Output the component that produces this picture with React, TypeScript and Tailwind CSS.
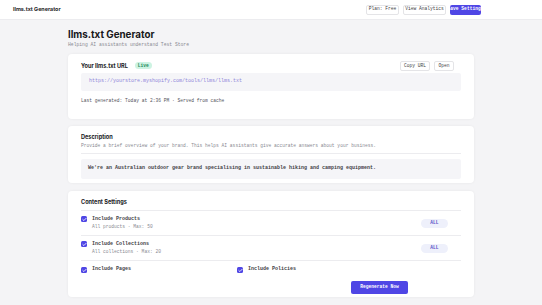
import { Check } from "lucide-react";

const mono = { fontFamily: '"Liberation Mono", "DejaVu Sans Mono", monospace' };
const sans = { fontFamily: "Inter, sans-serif" };

function Box() {
  return (
    <span className="flex h-[6px] w-[6px] shrink-0 items-center justify-center rounded-[1.5px] bg-[#4f46e5]">
      <Check className="h-[5px] w-[5px] text-white" strokeWidth={4} />
    </span>
  );
}

function SettingRow({ title, sub }: { title: string; sub: string }) {
  return (
    <div className="flex h-[25px] items-center justify-between border-t border-[#ececef]">
      <div className="flex flex-col">
        <div className="flex items-center gap-[5px]">
          <Box />
          <span className="text-[5px] font-bold leading-[7px] text-[#3f3f46]">{title}</span>
        </div>
        <span className="ml-[11px] text-[4.6px] leading-[8px] text-[#8a8a92]">{sub}</span>
      </div>
      <span className="mr-[13px] flex h-[9px] w-[27px] items-center justify-center rounded-full bg-[#eef0fb] text-[4.6px] font-bold text-[#5b56c9]">
        ALL
      </span>
    </div>
  );
}

export default function App() {
  return (
    <div className="min-h-[305px] bg-[#f4f4f6]" style={mono}>
      {/* top bar */}
      <div className="flex h-[20px] items-center justify-between border-b border-[#ececef] bg-white pl-[13px] pr-[61px]">
        <span className="text-[5.4px] font-bold text-[#27272a]" style={sans}>
          llms.txt Generator
        </span>
        <div className="flex items-center gap-[4px]">
          <span className="flex h-[10px] w-[33px] items-center justify-center rounded-[2px] border border-[#e4e4e7] bg-white text-[4.6px] text-[#3f3f46]">
            Plan: Free
          </span>
          <span className="flex h-[10px] w-[43px] items-center justify-center rounded-[2px] border border-[#e4e4e7] bg-white text-[4.6px] text-[#3f3f46]">
            View Analytics
          </span>
          <span className="flex h-[10px] w-[31px] items-center justify-center overflow-hidden whitespace-nowrap rounded-[2px] bg-[#4f46e5] text-[4.6px] font-bold text-white">
            Save Settings
          </span>
        </div>
      </div>

      <div className="mx-auto w-[406px] pt-[9px]">
        <h1 className="text-[9.8px] font-bold leading-[12px] text-[#18181b]" style={sans}>
          llms.txt Generator
        </h1>
        <p className="text-[4.7px] leading-[7px] text-[#8a8a92]">Helping AI assistants understand Test Store</p>

        {/* URL card */}
        <div className="mt-[6px] rounded-[4px] bg-white px-[13px] pb-[15px] pt-[7px] shadow-[0_0_3px_rgba(0,0,0,0.06)]">
          <div className="flex h-[10px] items-center justify-between">
            <div className="flex items-center gap-[7px]">
              <span className="text-[5.6px] font-bold text-[#18181b]" style={sans}>
                Your llms.txt URL
              </span>
              <span className="flex h-[7px] items-center rounded-full bg-[#cdf3e2] px-[3px] text-[4.6px] font-bold text-[#1f8a5b]">
                Live
              </span>
            </div>
            <div className="flex gap-[4px] pr-[7px]">
              <span className="flex h-[10px] w-[30px] items-center justify-center rounded-[2px] border border-[#e4e4e7] text-[4.6px] text-[#3f3f46]">
                Copy URL
              </span>
              <span className="flex h-[10px] w-[20px] items-center justify-center rounded-[2px] border border-[#e4e4e7] text-[4.6px] text-[#3f3f46]">
                Open
              </span>
            </div>
          </div>
          <div className="mt-[2px] flex h-[18px] items-center rounded-[2px] bg-[#f5f5f8] px-[8px] text-[5px] text-[#8f86d9]">
            https://yourstore.myshopify.com/tools/llms/llms.txt
          </div>
          <p className="mt-[7px] text-[4.6px] leading-[6px] text-[#52525b]">
            Last generated: Today at 2:36 PM · Served from cache
          </p>
        </div>

        {/* description */}
        <div className="mt-[7px] rounded-[4px] bg-white px-[13px] pb-[4px] pt-[7px] shadow-[0_0_3px_rgba(0,0,0,0.06)]">
          <h2 className="text-[5.6px] font-bold leading-[8px] text-[#18181b]" style={sans}>
            Description
          </h2>
          <p className="text-[4.6px] leading-[9px] text-[#8a8a92]">
            Provide a brief overview of your brand. This helps AI assistants give accurate answers about your business.
          </p>
          <div className="mt-[3px] border-t border-[#ececef]" />
          <div className="mt-[5px] flex h-[20px] items-center rounded-[2px] bg-[#f5f5f8] px-[7px] text-[5px] font-bold text-[#3f3f46]">
            We're an Australian outdoor gear brand specialising in sustainable hiking and camping equipment.
          </div>
        </div>

        {/* content settings */}
        <div className="mt-[8px] rounded-[4px] bg-white px-[13px] pb-[3px] pt-[7px] shadow-[0_0_3px_rgba(0,0,0,0.06)]">
          <h2 className="pb-[4px] text-[5.6px] font-bold leading-[8px] text-[#18181b]" style={sans}>
            Content Settings
          </h2>
          <SettingRow title="Include Products" sub="All products · Max: 50" />
          <SettingRow title="Include Collections" sub="All collections · Max: 20" />
          <div className="flex h-[19px] items-center border-t border-[#ececef]">
            <div className="flex w-[156px] items-center gap-[5px]">
              <Box />
              <span className="text-[5px] font-bold text-[#3f3f46]">Include Pages</span>
            </div>
            <div className="flex items-center gap-[5px]">
              <Box />
              <span className="text-[5px] font-bold text-[#3f3f46]">Include Policies</span>
            </div>
          </div>
          <div className="mt-[2px] flex justify-end pr-[53px]">
            <span className="flex h-[13px] w-[57px] items-center justify-center rounded-[2px] bg-[#4f46e5] text-[4.6px] font-bold text-white">
              Regenerate Now
            </span>
          </div>
        </div>
      </div>
    </div>
  );
}
